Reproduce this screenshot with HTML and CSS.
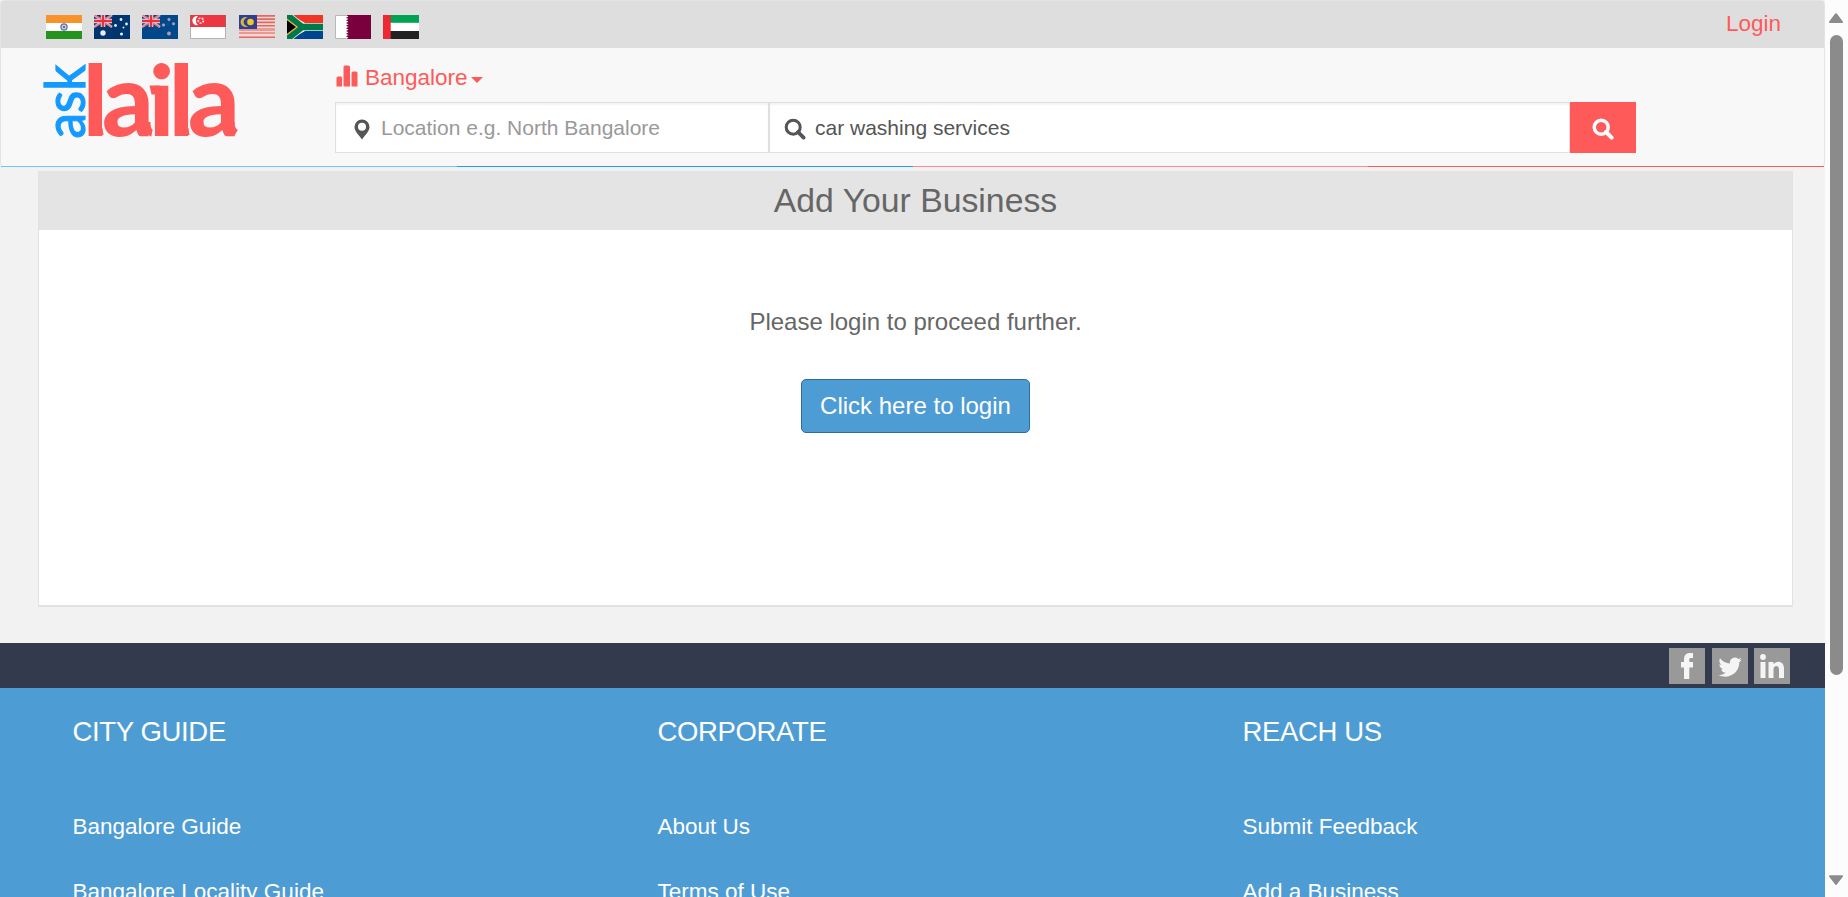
FILE: index.html
```html
<!DOCTYPE html>
<html lang="en">
<head>
<meta charset="utf-8">
<title>Add Your Business - asklaila</title>
<link rel="stylesheet" href="styles.css">
</head>
<body>
<div class="page">
  <header class="header">
    <div class="topbar">
      <div class="flags">
        <svg class="flag" viewBox="0 0 36 24"><path fill="#fff" d="M0 0h36v24H0z"/><path fill="#f7932d" d="M0 0h36v8H0z"/><path fill="#24931f" d="M0 16h36v8H0z"/><circle cx="18" cy="12" r="3.1" fill="#c6cbe0" stroke="#5a6fa3" stroke-width="1.2"/><circle cx="18" cy="12" r="1" fill="#3b5590"/></svg>
        <svg class="flag" viewBox="0 0 36 24"><path fill="#00356f" d="M0 0h36v24H0z"/><path d="M0 0l18 12M18 0L0 12" stroke="#d9a9b8" stroke-width="2.6"/><path d="M9 0v12M0 6h18" stroke="#f3dfe5" stroke-width="4.6"/><path d="M9 0v12M0 6h18" stroke="#e8313f" stroke-width="2.6"/><path d="M1 0l6 4M17 0l-6 4M1 12l6-4M17 12l-6-4" stroke="#e2606e"/><g fill="#e8eef5"><circle cx="9" cy="18" r="2.700"/><circle cx="27" cy="4.500" r="1.400"/><circle cx="21.500" cy="10.500" r="1.400"/><circle cx="32.500" cy="9" r="1.400"/><circle cx="29.500" cy="12.500" r=".9"/><circle cx="27.500" cy="19" r="1.500"/></g></svg>
        <svg class="flag" viewBox="0 0 36 24"><path fill="#00488a" d="M0 0h36v24H0z"/><path d="M0 0l18 12M18 0L0 12" stroke="#d9a9b8" stroke-width="2.600"/><path d="M9 0v12M0 6h18" stroke="#f3dfe5" stroke-width="4.600"/><path d="M9 0v12M0 6h18" stroke="#e8313f" stroke-width="2.600"/><path d="M1 0l6 4M17 0l-6 4M1 12l6-4M17 12l-6-4" stroke="#e2606e"/><g fill="#d58e9f" stroke="#93a7c9" stroke-width=".6"><circle cx="27" cy="4.500" r="1.300"/><circle cx="21.500" cy="10" r="1.300"/><circle cx="31.500" cy="8.800" r="1.300"/><circle cx="27" cy="18.500" r="1.700"/></g></svg>
        <svg class="flag" viewBox="0 0 36 24"><path fill="#fff" d="M0 0h36v24H0z"/><path fill="#ec3742" d="M0 0h36v12H0z"/><path fill="#fff" d="M8 1a4.700 4.700 0 1 0 0 9.200A6 6 0 0 1 8 1z"/><circle cx="10.800" cy="5.600" r="2.600" fill="none" stroke="#fbd5d8" stroke-width="1.800" stroke-dasharray="2 1.200"/><path fill="none" stroke="#777" stroke-opacity=".55" d="M.5 0v23.500h35V0"/></svg>
        <svg class="flag flag-my" viewBox="0 0 36 23"><path fill="#f4d6d3" d="M0 0h36v23H0z"/><path fill="#dd6a65" d="M0 0h36v1.700H0zM0 3.300h36V5H0zM0 6.600h36v1.700H0zM0 9.900h36v1.700H0z"/><path fill="#ea9a95" d="M0 13h36v3H0zM0 17h36v2H0z"/><path fill="#dd6a65" d="M0 21.500h36V23H0z"/><path fill="#30408f" d="M0 0h18v14H0z"/><path fill="#d6b644" d="M9 2.600a5 5 0 1 0 0 8.800A4.400 4.400 0 1 1 9 2.600z"/><circle cx="11.500" cy="7" r="3.300" fill="#edc62e"/></svg>
        <svg class="flag" viewBox="0 0 36 24"><path fill="#fff" d="M0 0h36v24H0z"/><path fill="#f13524" d="M4 0h32v8H18z"/><path fill="#00468f" d="M4 24h32v-8H18z"/><path d="M0 0l15 12L0 24M14 12h22" fill="none" stroke="#d9eadf" stroke-width="8"/><path d="M0 0l15 12L0 24M13 12h23" fill="none" stroke="#00794a" stroke-width="6.400"/><path fill="#000" stroke="#e9ae3d" stroke-width="1.500" d="M-2 2.800L10 12-2 21.200z"/></svg>
        <svg class="flag" viewBox="0 0 36 24"><path fill="#7a003d" d="M0 0h36v24H0z"/><path fill="#fff" d="M0 0h11l2.500 1.400L11 2.700l2.500 1.300L11 5.300l2.500 1.400L11 8l2.500 1.300L11 10.700l2.500 1.300-2.500 1.300 2.500 1.400L11 16l2.500 1.300-2.500 1.400 2.500 1.300-2.500 1.300 2.500 1.400L11 24H0z"/><path fill="none" stroke="#888" stroke-opacity=".6" d="M11 .5H.5v23H11"/></svg>
        <svg class="flag" viewBox="0 0 36 24"><path fill="#fff" d="M0 0h36v24H0z"/><path fill="#00a352" d="M7 0h29v7.800H7z"/><path fill="#222" d="M7 16h29v8H7z"/><path fill="#ed2833" d="M0 0h7.700v24H0z"/></svg>
      </div>
      <a class="login">Login</a>
    </div>
    <div class="mainbar">
      <svg class="logo" viewBox="0 0 200 90">
        <text class="logo-ask" transform="translate(42 76.500) rotate(-90)" textLength="74" lengthAdjust="spacingAndGlyphs">ask</text>
        <text class="logo-laila" y="73.500" x="40 59 106 126 145">l<tspan class="logo-a">a</tspan>il<tspan class="logo-a">a</tspan></text>
        <g fill="none" stroke="#ff5a5a" stroke-width="7"><path d="M51 60q0 11 9 9.500M104 60q0 10 5 11M137 60q0 11 9 9.500M188 60q0 8 5 11"/></g>
        <path fill="#ff5a5a" d="M106.500 23.500h10v9h-8z"/>
      </svg>
      <div class="search">
        <div class="city">
          <svg class="bars" viewBox="0 0 22 22"><path fill="#ff5a5a" d="M.5 21.500v-8.500q0-1.500 1.500-1.500h3q1 0 1 1.500v8.500zM7.500 21.500V2q0-1.500 1.500-1.500h3.500Q14 .5 14 2v19.500zM15.500 21.500V8q0-1.500 1.500-1.500h3q1.500 0 1.500 1.500v13.500z"/></svg>
          <span class="city-name">Bangalore</span>
          <span class="caret"></span>
        </div>
        <div class="fields">
          <div class="field field-location">
            <svg class="pin" viewBox="0 0 16 21"><path fill="#555" fill-rule="evenodd" d="M8 .5a7.400 7.400 0 0 1 7.500 7.500c0 4-3.500 7-7.500 12.500C4 15 .5 12 .5 8A7.400 7.400 0 0 1 8 .5zm0 3.300a4 4 0 1 0 0 8 4 4 0 0 0 0-8z"/></svg>
            <span class="placeholder">Location e.g. North Bangalore</span>
          </div>
          <div class="field field-query">
            <svg class="lens" viewBox="0 0 22 22"><circle cx="9.200" cy="9.200" r="7" fill="none" stroke="#555" stroke-width="3"/><path d="M14 14l5.600 5.600" stroke="#555" stroke-width="3.800" stroke-linecap="round"/></svg>
            <span class="query">car washing services</span>
          </div>
          <div class="submit">
            <svg class="lens" viewBox="0 0 22 22"><circle cx="9.200" cy="9.200" r="7" fill="none" stroke="#fff" stroke-width="3.400"/><path d="M14 14l5.600 5.600" stroke="#fff" stroke-width="4" stroke-linecap="round"/></svg>
          </div>
        </div>
      </div>
    </div>
    <div class="stripe"><i class="s1"></i><i class="s2"></i><i class="s3"></i><i class="s4"></i></div>
  </header>
  <main class="card">
    <h1 class="card-title">Add Your Business</h1>
    <div class="card-body">
      <p class="message">Please login to proceed further.</p>
      <a class="btn">Click here to login</a>
    </div>
  </main>
  <div class="social">
    <svg class="tile tile-fb" viewBox="0 0 36 36"><path fill="#f5f5f5" d="M15 31V19.500h-3V14h3v-2.500c0-4.600 2.500-6.500 6.500-6.500H24v5h-2c-1.300 0-1.700.6-1.700 2v2h3.700v5.500h-3.700V31z"/></svg>
    <svg class="tile tile-tw" viewBox="0 0 36 36"><path fill="#f5f5f5" d="M30 11.500l-2.700.8 2-2.500-3 1.100a5 5 0 0 0-8.300 4.700c-4-.2-7.500-2-10-5.300-1.300 2.300-.6 5 1.500 6.600L7.400 16.300c0 2.500 1.600 4.500 3.900 5l-2.200.1c.7 2 2.400 3.300 4.500 3.400A10 10 0 0 1 6.500 27c9.500 5 21-1.500 20.800-12.700z"/></svg>
    <svg class="tile" viewBox="0 0 36 36"><g fill="#f5f5f5"><circle cx="9" cy="9" r="2.900"/><path d="M6.500 14h5v16h-5zM14.500 14h5v2.200c3-4.200 10.500-3.400 10.500 4V30h-5v-8.500c0-4.800-5.500-4.600-5.500 0V30h-5z"/></g></svg>
  </div>
  <footer class="footer">
    <section class="col"><h2>CITY GUIDE</h2><a>Bangalore Guide</a><a>Bangalore Locality Guide</a></section>
    <section class="col"><h2>CORPORATE</h2><a>About Us</a><a>Terms of Use</a></section>
    <section class="col"><h2>REACH US</h2><a>Submit Feedback</a><a>Add a Business</a></section>
  </footer>
</div>
<div class="scrollbar">
  <svg class="arrow" viewBox="0 0 14 10"><path fill="#8b8b8b" stroke="#8b8b8b" stroke-width="2" stroke-linejoin="round" d="M7 1.200L13 9H1z"/></svg>
  <div class="thumb"></div>
  <svg class="arrow arrow-down" viewBox="0 0 14 10"><path fill="#8b8b8b" stroke="#8b8b8b" stroke-width="2" stroke-linejoin="round" d="M7 9l6-7.800H1z"/></svg>
</div>
</body>
</html>
```
FILE: styles.css
```css
* { box-sizing: border-box; }
body {
  margin: 0;
  height: 897px;
  overflow: hidden;
  display: flex;
  background: #f2f2f2;
  font-family: "Liberation Sans", Arial, sans-serif;
  color: #666;
}
svg { display: block; flex: none; }
.page { width: 1825px; height: 897px; overflow: hidden; flex: none; }

.header {
  height: 167px;
  border: 1px solid #e4e4e4;
  border-bottom: 0;
  border-radius: 5px;
  background: #f8f8f8;
}
.topbar {
  height: 47px;
  padding: 14px 43px 0 45px;
  display: flex;
  justify-content: space-between;
  background: #dedede;
}
.flags { display: flex; gap: 12px; }
.flag { width: 36px; height: 24px; }
.flag-my { height: 23px; margin-left: 1px; }
.login { font-size: 22.5px; line-height: 26px; margin-top: -4px; color: #ff5a5a; }

.mainbar { height: 118px; display: flex; }
.logo { width: 200px; height: 90px; margin: 14px 0 0 42px; overflow: visible; }
.logo-ask { font: 400 56px Lato, sans-serif; fill: #149aff; stroke: #149aff; stroke-width: 1.200px; }
.logo-laila { font: 900 97px Lato, sans-serif; fill: #ff5a5a; }
.logo-a { font-size: 101px; }
.search { margin-left: 92px; padding-top: 15px; }
.city { height: 39px; display: flex; color: #ff5a5a; }
.bars { width: 22px; height: 22px; margin: 2px 7px 0 1px; }
.city-name { font-size: 22.5px; line-height: 30px; }
.caret {
  width: 12px;
  height: 6px;
  margin: 14px 0 0 3px;
  border: 6px solid transparent;
  border-top-color: #ff5a5a;
  border-bottom: 0;
}
.fields { display: flex; height: 51px; font-size: 21px; line-height: 51px; }
.field {
  display: flex;
  align-items: center;
  background: #fff;
  border: 1px solid #e0dede;
  box-shadow: inset 0 2px 2px rgba(0, 0, 0, .05);
}
.field-location { width: 434px; padding-left: 18px; }
.field-query { width: 801px; padding-left: 14px; }
.pin { width: 16px; height: 21px; margin: 3px 11px 0 0; }
.placeholder { color: #999; }
.query { color: #555; margin-left: 9px; }
.lens { width: 22px; height: 22px; margin-top: 3px; }
.submit { width: 66px; display: flex; align-items: center; justify-content: center; background: #ff5a5a; }

.stripe { display: flex; height: 1px; }
.stripe i { flex: 1; }
.s1 { background: #70c4fc; }
.s2 { background: #1c9cf8; }
.s3 { background: #ff8c8c; }
.s4 { background: #ff5a5a; }

.card {
  width: 1755px;
  height: 436px;
  margin: 4px 0 36px 38px;
  background: #fff;
  border: 1px solid #e4e1e1;
  border-top: 0;
  border-bottom-width: 2px;
}
.card-title {
  margin: 0;
  height: 59px;
  background: #e4e4e4;
  font-weight: 400;
  font-size: 33.750px;
  line-height: 58px;
  text-align: center;
}
.card-body { display: flex; flex-direction: column; align-items: center; }
.message { margin: 78px 0 0; font-size: 24px; line-height: 28px; }
.btn {
  width: 229px;
  height: 54px;
  margin-top: 43px;
  border: 1px solid #2e6da4;
  border-radius: 5px;
  background: #4e9cd4;
  color: #fff;
  font-size: 24px;
  line-height: 52px;
  text-align: center;
}

.social {
  height: 45px;
  padding: 5px 35px 0 0;
  display: flex;
  justify-content: flex-end;
  background: #333a4d;
}
.tile { width: 36px; height: 36px; background: #999; }
.tile-fb { margin-right: 7px; }
.tile-tw { margin-right: 6px; }
.footer {
  height: 300px;
  padding: 24px 0 0 72.500px;
  display: grid;
  grid-template-columns: repeat(3, 585px);
  background: #4e9cd4;
  color: #fff;
}
.col h2 { margin: 0 0 61px; font-weight: 400; font-size: 27.500px; line-height: 39px; letter-spacing: -.35px; }
.col a { display: block; height: 65px; font-size: 22.500px; line-height: 30px; }

.scrollbar { width: 23px; height: 897px; padding: 13px 0 12px 4px; background: #fcfcfc; }
.arrow { width: 14px; height: 10px; }
.thumb { width: 13px; height: 640px; margin: 12px 0 200px 1px; border-radius: 7px; background: #8b8b8b; }
```
